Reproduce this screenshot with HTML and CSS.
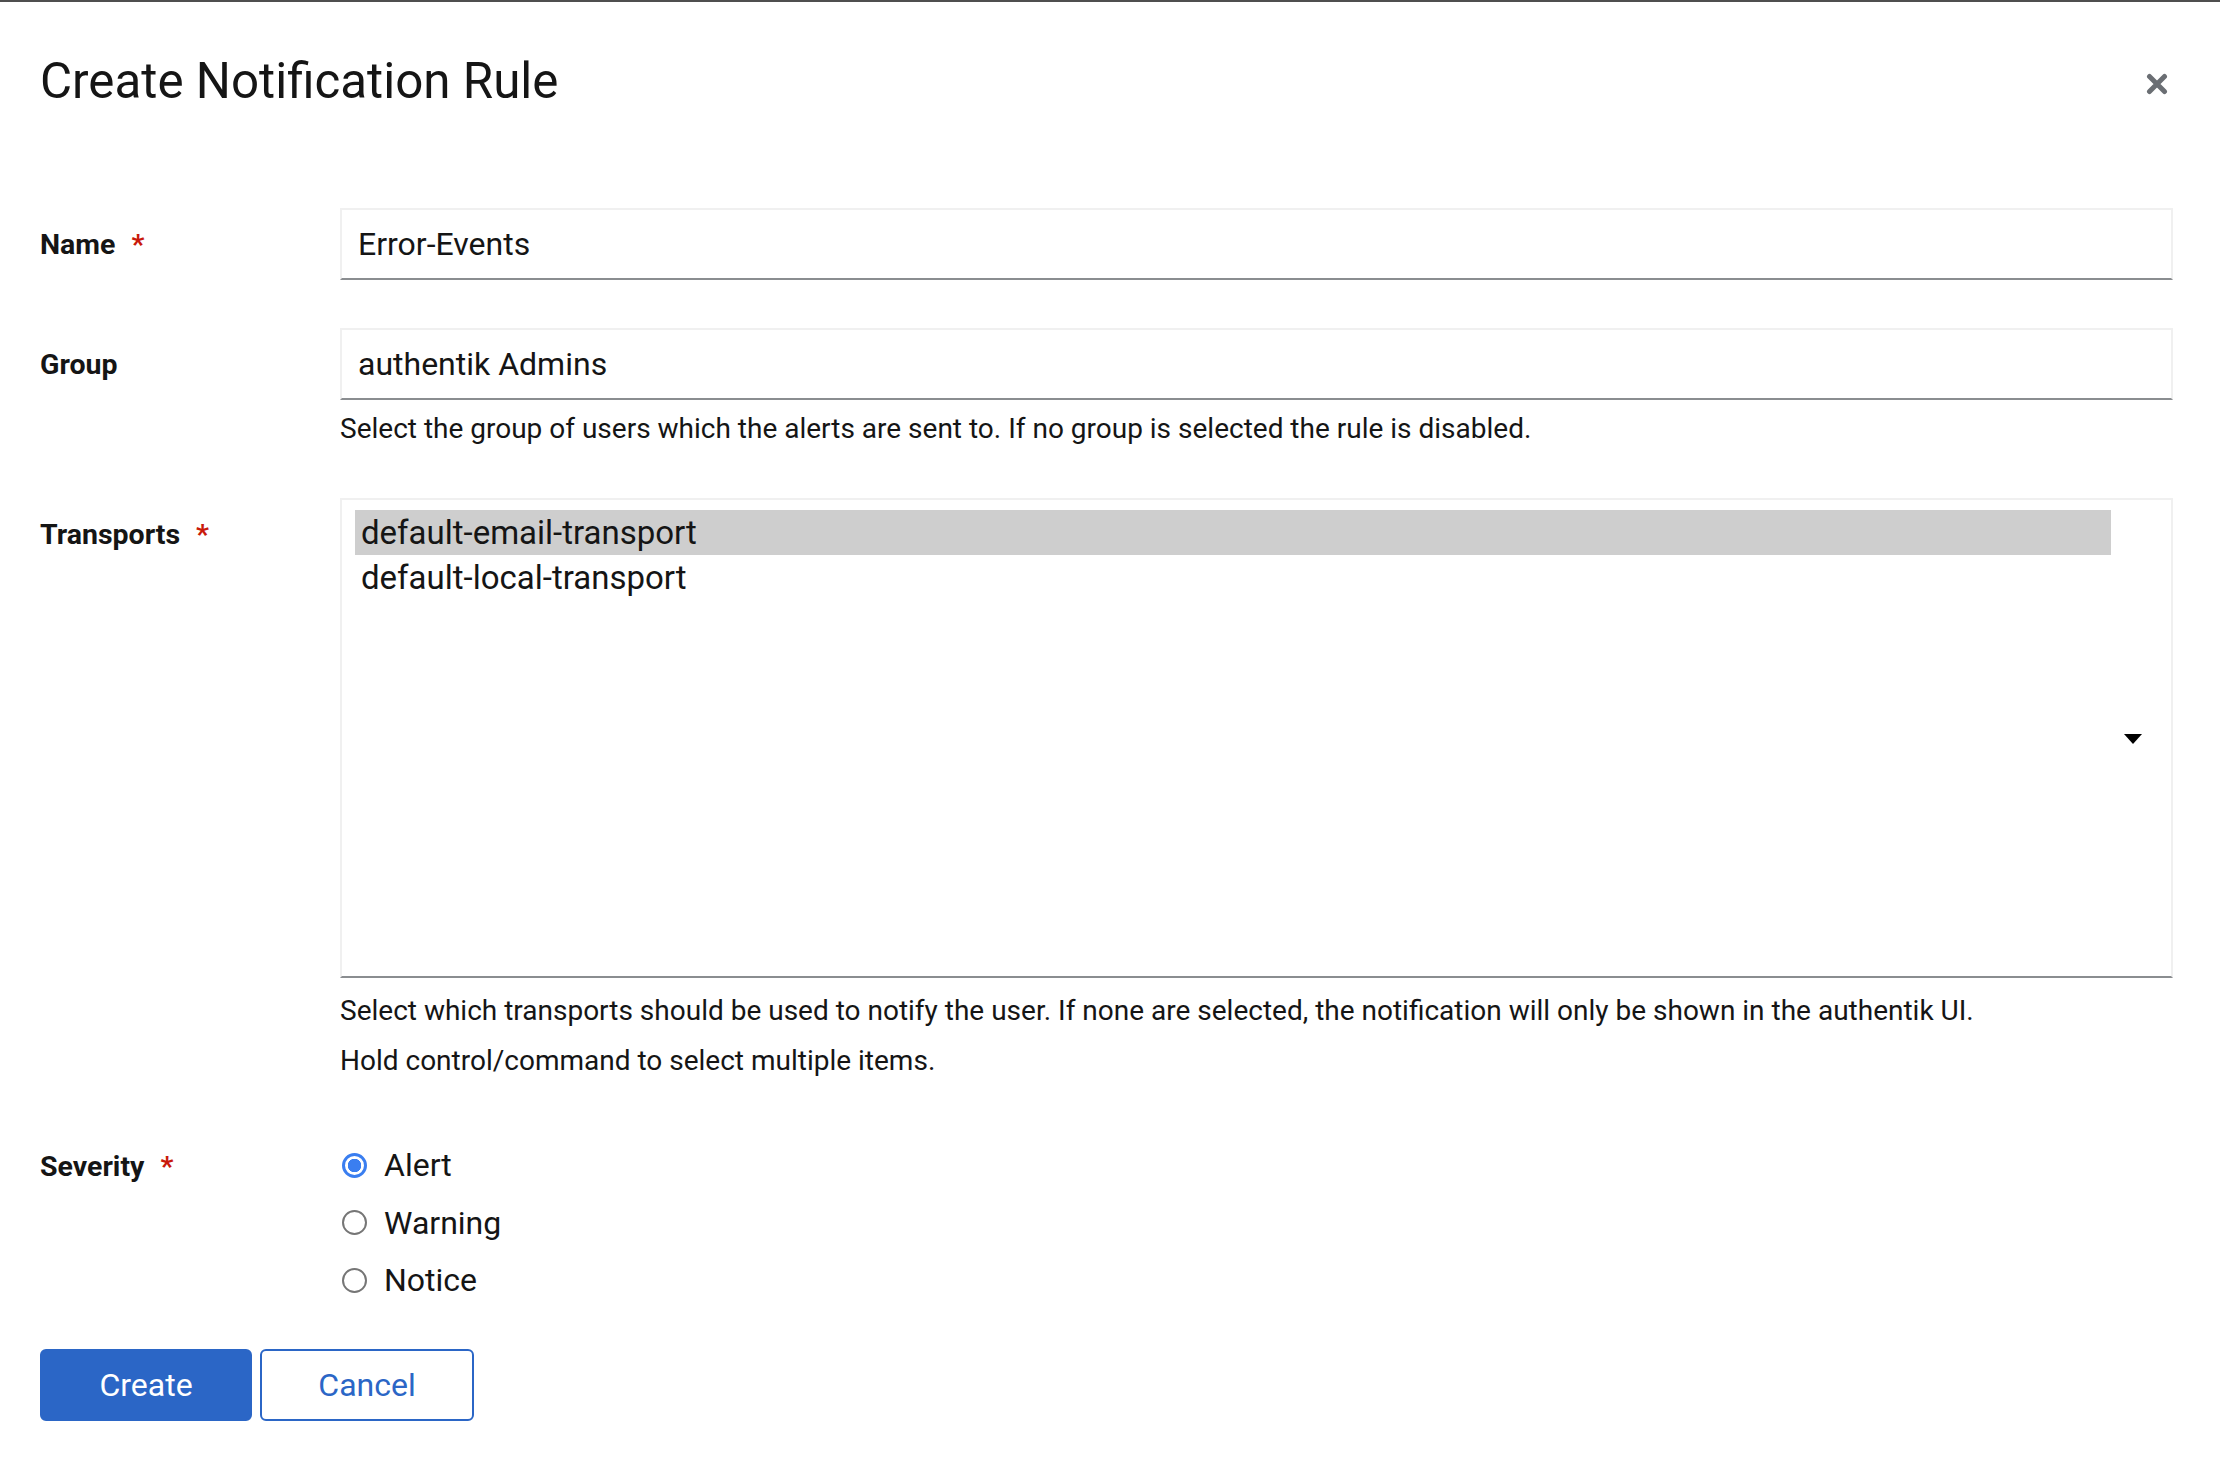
FILE: index.html
```html
<!DOCTYPE html>
<html lang="en">
<head>
<meta charset="utf-8">
<title>Create Notification Rule</title>
<link rel="stylesheet" href="styles.css">
</head>
<body>
<div class="modal">
  <header class="modal-header">
    <h1 class="modal-title">Create Notification Rule</h1>
    <button class="close-btn" type="button" aria-label="Close">
      <svg class="close-icon" viewBox="0 0 22 22" width="22" height="22" aria-hidden="true">
        <path d="M3.5 3.5 L18.5 18.5 M18.5 3.5 L3.5 18.5" stroke="#6a6e73" stroke-width="5" stroke-linecap="round" fill="none"/>
      </svg>
    </button>
  </header>

  <form class="form">
    <div class="form-group">
      <div class="label-col"><label class="form-label">Name<span class="req">*</span></label></div>
      <div class="control-col">
        <div class="text-input">Error-Events</div>
      </div>
    </div>

    <div class="form-group">
      <div class="label-col"><label class="form-label">Group</label></div>
      <div class="control-col">
        <div class="text-input">authentik Admins</div>
        <p class="helper helper-first">Select the group of users which the alerts are sent to. If no group is selected the rule is disabled.</p>
      </div>
    </div>

    <div class="form-group">
      <div class="label-col"><label class="form-label">Transports<span class="req">*</span></label></div>
      <div class="control-col">
        <div class="multi-select">
          <ul class="options">
            <li class="option selected">default-email-transport</li>
            <li class="option">default-local-transport</li>
          </ul>
          <span class="caret"></span>
        </div>
        <p class="helper helper-select">Select which transports should be used to notify the user. If none are selected, the notification will only be shown in the authentik UI.</p>
        <p class="helper helper-next">Hold control/command to select multiple items.</p>
      </div>
    </div>

    <div class="form-group">
      <div class="label-col"><label class="form-label">Severity<span class="req">*</span></label></div>
      <div class="control-col">
        <div class="radio-group">
          <div class="radio"><span class="radio-dot checked"></span><span class="radio-label">Alert</span></div>
          <div class="radio"><span class="radio-dot"></span><span class="radio-label">Warning</span></div>
          <div class="radio"><span class="radio-dot"></span><span class="radio-label">Notice</span></div>
        </div>
      </div>
    </div>
  </form>

  <footer class="actions">
    <button class="btn btn-primary" type="button">Create</button>
    <button class="btn btn-secondary" type="button">Cancel</button>
  </footer>
</div>
</body>
</html>
```
FILE: styles.css
```css
html, body {
  margin: 0;
  padding: 0;
  background: #ffffff;
}

body {
  font-family: Roboto, "Liberation Sans", sans-serif;
  color: #151515;
}

.modal {
  border-top: 2px solid #4f4f4f;
  padding: 48px 47px 40px 40px;
}

.modal-header {
  display: flex;
  align-items: flex-start;
  justify-content: space-between;
}

.modal-title {
  margin: 0;
  font-size: 49.3px;
  line-height: 62px;
  font-weight: 400;
  color: #151515;
}

.close-btn {
  border: 0;
  background: transparent;
  padding: 0;
  margin: 23px 5px 0 0;
  width: 22px;
  height: 22px;
  display: flex;
  cursor: pointer;
}

.close-icon {
  display: block;
}

.form {
  margin-top: 96px;
  display: flex;
  flex-direction: column;
  gap: 48px;
}

.form-group {
  display: grid;
  grid-template-columns: 300px 1fr;
}

.label-col {
  padding-top: 16px;
}

.form-label {
  font-size: 28.5px;
  line-height: 42px;
  font-weight: 700;
  color: #151515;
}

.req {
  color: #c9190b;
  margin-left: 16px;
  font-weight: 700;
}

.text-input {
  box-sizing: border-box;
  height: 72px;
  border: 2px solid #f0f0f0;
  border-bottom-color: #8a8d90;
  padding: 0 16px;
  display: flex;
  align-items: center;
  font-size: 32px;
  color: #151515;
}

.helper {
  margin: 0;
  font-size: 28px;
  line-height: 42px;
  color: #151515;
}

.helper-first {
  margin-top: 8px;
}

.helper-select {
  margin-top: 12px;
}

.helper-next {
  margin-top: 8px;
}

.multi-select {
  box-sizing: border-box;
  height: 480px;
  border: 2px solid #f0f0f0;
  border-bottom-color: #8a8d90;
  display: flex;
  align-items: center;
}

.options {
  list-style: none;
  margin: 0;
  padding: 10px 0 0 13px;
  align-self: flex-start;
  flex: 1;
}

.option {
  height: 45px;
  line-height: 45px;
  padding: 0 6px;
  font-size: 33px;
  color: #151515;
  white-space: nowrap;
}

.option.selected {
  background: #cecece;
}

.caret {
  width: 0;
  height: 0;
  margin: 2px 29px 0 13px;
  border-left: 9.5px solid transparent;
  border-right: 9.5px solid transparent;
  border-top: 10px solid #000000;
}

.radio-group {
  padding-top: 11px;
  display: flex;
  flex-direction: column;
  gap: 9.5px;
}

.radio {
  height: 48px;
  display: flex;
  align-items: center;
  padding-left: 2px;
}

.radio-dot {
  box-sizing: border-box;
  width: 25px;
  height: 25px;
  border-radius: 50%;
  border: 2px solid #767676;
  background: #ffffff;
  flex: none;
}

.radio-dot.checked {
  border: 3.5px solid #3a7ef0;
  background: radial-gradient(circle, #3a7ef0 0 6.5px, #ffffff 7px);
}

.radio-label {
  margin-left: 17px;
  font-size: 32px;
  line-height: 48px;
  color: #151515;
}

.actions {
  margin-top: 45px;
  display: flex;
  gap: 8px;
}

.btn {
  box-sizing: border-box;
  height: 72px;
  border-radius: 6px;
  font-family: Roboto, "Liberation Sans", sans-serif;
  font-size: 32px;
  cursor: pointer;
  padding: 0;
}

.btn-primary {
  width: 212px;
  background: #2b66c6;
  color: #ffffff;
  border: 2px solid #2b66c6;
}

.btn-secondary {
  width: 214px;
  background: #ffffff;
  color: #2b66c6;
  border: 2px solid #2b66c6;
}
```
